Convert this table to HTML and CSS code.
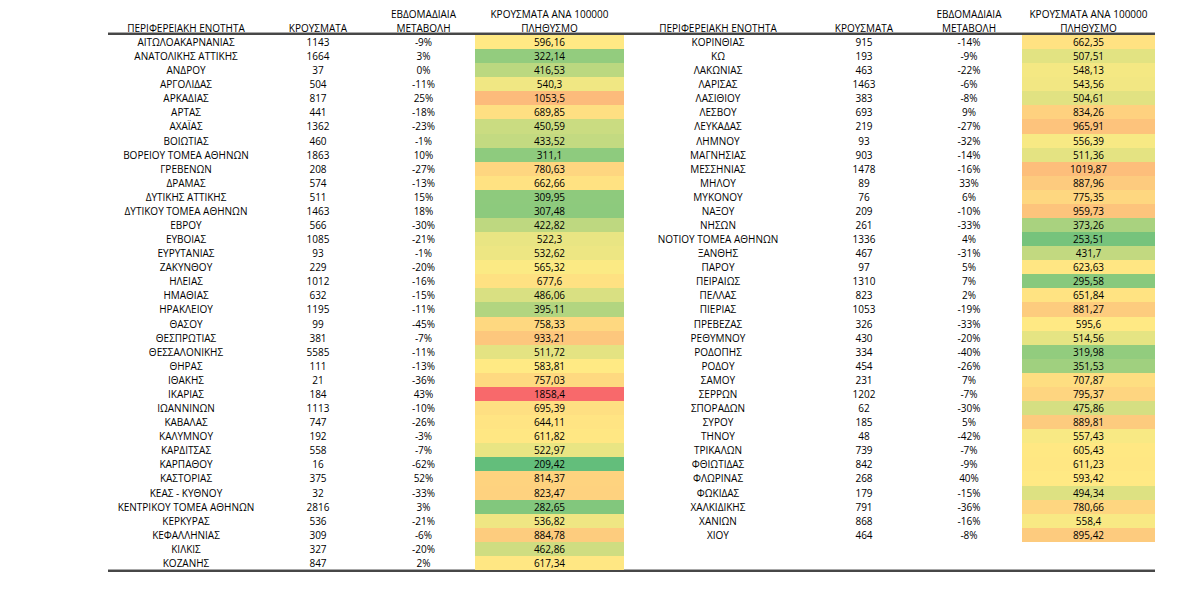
FILE: index.html
```html
<!DOCTYPE html>
<html lang="el">
<head>
<meta charset="utf-8">
<title>Κρούσματα ανά περιφερειακή ενότητα</title>
<link rel="stylesheet" href="styles.css">
</head>
<body>
<div class="sheet">
  <div class="head">
    <div class="hcell"><span>ΠΕΡΙΦΕΡΕΙΑΚΗ ΕΝΟΤΗΤΑ</span></div>
    <div class="hcell"><span>ΚΡΟΥΣΜΑΤΑ</span></div>
    <div class="hcell"><span>ΕΒΔΟΜΑΔΙΑΙΑ<br>ΜΕΤΑΒΟΛΗ</span></div>
    <div class="hcell"><span>ΚΡΟΥΣΜΑΤΑ ΑΝΑ 100000<br>ΠΛΗΘΥΣΜΟ</span></div>
    <div class="hcell"><span>ΠΕΡΙΦΕΡΕΙΑΚΗ ΕΝΟΤΗΤΑ</span></div>
    <div class="hcell"><span>ΚΡΟΥΣΜΑΤΑ</span></div>
    <div class="hcell"><span>ΕΒΔΟΜΑΔΙΑΙΑ<br>ΜΕΤΑΒΟΛΗ</span></div>
    <div class="hcell"><span>ΚΡΟΥΣΜΑΤΑ ΑΝΑ 100000<br>ΠΛΗΘΥΣΜΟ</span></div>
  </div>
  <div class="body" id="body"></div>
</div>
<script src="script.js"></script>
</body>
</html>
```

FILE: styles.css
```css
html, body {
  margin: 0;
  padding: 0;
  background: #ffffff;
}
body {
  font-family: "Open Sans", "Noto Sans", "DejaVu Sans", sans-serif;
  font-size: 10px;
  font-weight: 500;
  color: #000000;
}
.sheet {
  margin-left: 108px;
  width: 1047px;
}
.head,
.body {
  display: grid;
  grid-template-columns: 156px 108px 103px 149px 188px 104px 106px 133px;
}
.head {
  height: 33px;
  border-bottom: 2px solid #474747;
  box-shadow: inset 0 -1px 0 #a8a8a8;
}
.hcell {
  display: flex;
  align-items: flex-end;
  justify-content: center;
  text-align: center;
  line-height: 14px;
  white-space: nowrap;
}
.hcell span {
  margin-bottom: -2px;
}
.body {
  grid-auto-rows: 14.08px;
  border-bottom: 2px solid #474747;
  box-shadow: inset 0 -1px 0 #a8a8a8;
}
.cell {
  line-height: 14.08px;
  text-align: center;
  white-space: nowrap;
  overflow: hidden;
}
```

FILE: script.js
```js
(function () {
  var left = [
    ["ΑΙΤΩΛΟΑΚΑΡΝΑΝΙΑΣ", "1143", "-9%", "596,16"],
    ["ΑΝΑΤΟΛΙΚΗΣ ΑΤΤΙΚΗΣ", "1664", "3%", "322,14"],
    ["ΑΝΔΡΟΥ", "37", "0%", "416,53"],
    ["ΑΡΓΟΛΙΔΑΣ", "504", "-11%", "540,3"],
    ["ΑΡΚΑΔΙΑΣ", "817", "25%", "1053,5"],
    ["ΑΡΤΑΣ", "441", "-18%", "689,85"],
    ["ΑΧΑΪΑΣ", "1362", "-23%", "450,59"],
    ["ΒΟΙΩΤΙΑΣ", "460", "-1%", "433,52"],
    ["ΒΟΡΕΙΟΥ ΤΟΜΕΑ ΑΘΗΝΩΝ", "1863", "10%", "311,1"],
    ["ΓΡΕΒΕΝΩΝ", "208", "-27%", "780,63"],
    ["ΔΡΑΜΑΣ", "574", "-13%", "662,66"],
    ["ΔΥΤΙΚΗΣ ΑΤΤΙΚΗΣ", "511", "15%", "309,95"],
    ["ΔΥΤΙΚΟΥ ΤΟΜΕΑ ΑΘΗΝΩΝ", "1463", "18%", "307,48"],
    ["ΕΒΡΟΥ", "566", "-30%", "422,82"],
    ["ΕΥΒΟΙΑΣ", "1085", "-21%", "522,3"],
    ["ΕΥΡΥΤΑΝΙΑΣ", "93", "-1%", "532,62"],
    ["ΖΑΚΥΝΘΟΥ", "229", "-20%", "565,32"],
    ["ΗΛΕΙΑΣ", "1012", "-16%", "677,6"],
    ["ΗΜΑΘΙΑΣ", "632", "-15%", "486,06"],
    ["ΗΡΑΚΛΕΙΟΥ", "1195", "-11%", "395,11"],
    ["ΘΑΣΟΥ", "99", "-45%", "758,33"],
    ["ΘΕΣΠΡΩΤΙΑΣ", "381", "-7%", "933,21"],
    ["ΘΕΣΣΑΛΟΝΙΚΗΣ", "5585", "-11%", "511,72"],
    ["ΘΗΡΑΣ", "111", "-13%", "583,81"],
    ["ΙΘΑΚΗΣ", "21", "-36%", "757,03"],
    ["ΙΚΑΡΙΑΣ", "184", "43%", "1858,4"],
    ["ΙΩΑΝΝΙΝΩΝ", "1113", "-10%", "695,39"],
    ["ΚΑΒΑΛΑΣ", "747", "-26%", "644,11"],
    ["ΚΑΛΥΜΝΟΥ", "192", "-3%", "611,82"],
    ["ΚΑΡΔΙΤΣΑΣ", "558", "-7%", "522,97"],
    ["ΚΑΡΠΑΘΟΥ", "16", "-62%", "209,42"],
    ["ΚΑΣΤΟΡΙΑΣ", "375", "52%", "814,37"],
    ["ΚΕΑΣ - ΚΥΘΝΟΥ", "32", "-33%", "823,47"],
    ["ΚΕΝΤΡΙΚΟΥ ΤΟΜΕΑ ΑΘΗΝΩΝ", "2816", "3%", "282,65"],
    ["ΚΕΡΚΥΡΑΣ", "536", "-21%", "536,82"],
    ["ΚΕΦΑΛΛΗΝΙΑΣ", "309", "-6%", "884,78"],
    ["ΚΙΛΚΙΣ", "327", "-20%", "462,86"],
    ["ΚΟΖΑΝΗΣ", "847", "2%", "617,34"]
  ];
  var right = [
    ["ΚΟΡΙΝΘΙΑΣ", "915", "-14%", "662,35"],
    ["ΚΩ", "193", "-9%", "507,51"],
    ["ΛΑΚΩΝΙΑΣ", "463", "-22%", "548,13"],
    ["ΛΑΡΙΣΑΣ", "1463", "-6%", "543,56"],
    ["ΛΑΣΙΘΙΟΥ", "383", "-8%", "504,61"],
    ["ΛΕΣΒΟΥ", "693", "9%", "834,26"],
    ["ΛΕΥΚΑΔΑΣ", "219", "-27%", "965,91"],
    ["ΛΗΜΝΟΥ", "93", "-32%", "556,39"],
    ["ΜΑΓΝΗΣΙΑΣ", "903", "-14%", "511,36"],
    ["ΜΕΣΣΗΝΙΑΣ", "1478", "-16%", "1019,87"],
    ["ΜΗΛΟΥ", "89", "33%", "887,96"],
    ["ΜΥΚΟΝΟΥ", "76", "6%", "775,35"],
    ["ΝΑΞΟΥ", "209", "-10%", "959,73"],
    ["ΝΗΣΩΝ", "261", "-33%", "373,26"],
    ["ΝΟΤΙΟΥ ΤΟΜΕΑ ΑΘΗΝΩΝ", "1336", "4%", "253,51"],
    ["ΞΑΝΘΗΣ", "467", "-31%", "431,7"],
    ["ΠΑΡΟΥ", "97", "5%", "623,63"],
    ["ΠΕΙΡΑΙΩΣ", "1310", "7%", "295,58"],
    ["ΠΕΛΛΑΣ", "823", "2%", "651,84"],
    ["ΠΙΕΡΙΑΣ", "1053", "-19%", "881,27"],
    ["ΠΡΕΒΕΖΑΣ", "326", "-33%", "595,6"],
    ["ΡΕΘΥΜΝΟΥ", "430", "-20%", "514,56"],
    ["ΡΟΔΟΠΗΣ", "334", "-40%", "319,98"],
    ["ΡΟΔΟΥ", "454", "-26%", "351,53"],
    ["ΣΑΜΟΥ", "231", "7%", "707,87"],
    ["ΣΕΡΡΩΝ", "1202", "-7%", "795,37"],
    ["ΣΠΟΡΑΔΩΝ", "62", "-30%", "475,86"],
    ["ΣΥΡΟΥ", "185", "5%", "889,81"],
    ["ΤΗΝΟΥ", "48", "-42%", "557,43"],
    ["ΤΡΙΚΑΛΩΝ", "739", "-7%", "605,43"],
    ["ΦΘΙΩΤΙΔΑΣ", "842", "-9%", "611,23"],
    ["ΦΛΩΡΙΝΑΣ", "268", "40%", "593,42"],
    ["ΦΩΚΙΔΑΣ", "179", "-15%", "494,34"],
    ["ΧΑΛΚΙΔΙΚΗΣ", "791", "-36%", "780,66"],
    ["ΧΑΝΙΩΝ", "868", "-16%", "558,4"],
    ["ΧΙΟΥ", "464", "-8%", "895,42"]
  ];

  function num(s) { return parseFloat(s.replace(",", ".")); }

  var vals = left.concat(right).map(function (r) { return num(r[3]); });
  var sorted = vals.slice().sort(function (a, b) { return a - b; });
  var min = sorted[0];
  var max = sorted[sorted.length - 1];
  var rank = (sorted.length - 1) * 0.5;
  var lo = Math.floor(rank);
  var mid = sorted[lo] + (sorted[Math.min(lo + 1, sorted.length - 1)] - sorted[lo]) * (rank - lo);

  var GREEN = [99, 190, 123];
  var YELLOW = [255, 235, 132];
  var RED = [248, 105, 107];

  function lerp(a, b, t) {
    return [0, 1, 2].map(function (i) { return Math.round(a[i] + (b[i] - a[i]) * t); });
  }
  function colour(v) {
    var c;
    if (v <= mid) {
      c = lerp(GREEN, YELLOW, (v - min) / (mid - min));
    } else {
      c = lerp(YELLOW, RED, (v - mid) / (max - mid));
    }
    return "rgb(" + c.join(",") + ")";
  }

  var body = document.getElementById("body");
  var rows = Math.max(left.length, right.length);

  function addCells(r) {
    for (var k = 0; k < 4; k++) {
      var d = document.createElement("div");
      d.className = "cell";
      if (r) {
        d.textContent = r[k];
        if (k === 3) d.style.backgroundColor = colour(num(r[3]));
      }
      body.appendChild(d);
    }
  }

  for (var i = 0; i < rows; i++) {
    addCells(left[i]);
    addCells(right[i]);
  }
})();
```
